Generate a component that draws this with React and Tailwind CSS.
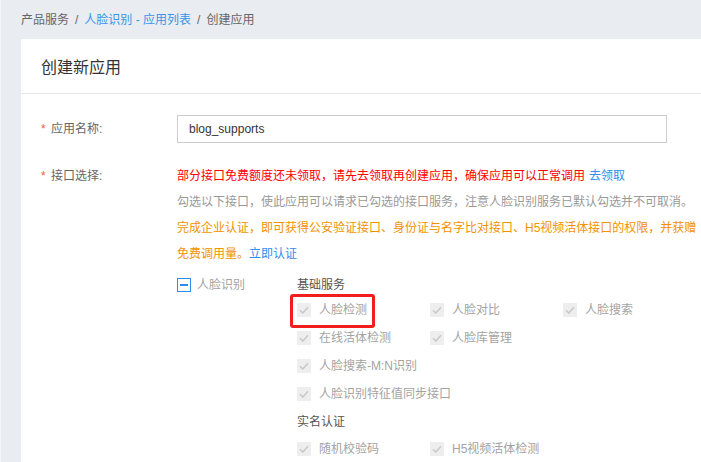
import React from 'react';

const font = { fontFamily: '"Liberation Sans", "Noto Sans CJK SC", sans-serif' };

const Check = () => (
  <span className="w-[14px] h-[14px] bg-[#eeeeee] flex items-center justify-center shrink-0">
    <svg width="10" height="8" viewBox="0 0 10 8">
      <path d="M1 4.2 L3.8 7 L9 1.3" fill="none" stroke="#c9c9c9" strokeWidth="1.6" />
    </svg>
  </span>
);

const Item = ({ label, marked }) => (
  <div className="relative h-[28px] flex items-center">
    <Check />
    <span className="ml-[8px] text-[#a3a3a3] whitespace-nowrap">{label}</span>
    {marked && (
      <div className="absolute left-[-7px] top-[-2px] w-[85px] h-[34px] border-[3px] border-[#f21d1d] rounded-[3px]" />
    )}
  </div>
);

const Section = ({ title, rows }) => (
  <div>
    <div className="h-[23px] flex items-center text-[#555]">{title}</div>
    {rows.map((row, i) => (
      <div key={i} className="grid grid-cols-[133px_133px_133px]">
        {row.map((it, j) =>
          it ? <Item key={j} label={it.label} marked={it.marked} /> : <div key={j} />
        )}
      </div>
    ))}
  </div>
);

export default function App() {
  return (
    <div className="w-[701px] h-[462px] overflow-hidden bg-[#e9ecf0] border-l border-[#f4f5f7] text-[12px]" style={font}>
      {/* Breadcrumb */}
      <div className="h-[39px] pl-[20px] flex items-center text-[#666]">
        <span>产品服务</span>
        <span className="mx-[6px]">/</span>
        <span className="text-[#3a94ea]">人脸识别 - 应用列表</span>
        <span className="mx-[6px]">/</span>
        <span>创建应用</span>
      </div>

      <div className="ml-[20px] bg-white h-[423px]">
        <div className="h-[55px] px-[20px] pt-[3px] flex items-center text-[16px] text-[#333] border-b border-[#e6e6e6]">
          创建新应用
        </div>

        <div className="pl-[20px] pt-[21px]">
          {/* App name */}
          <div className="flex items-center">
            <div className="w-[136px] flex items-center text-[#666]">
              <span className="text-[#f05a4a] w-[10px]">*</span>
              <span>应用名称:</span>
            </div>
            <div className="w-[490px] h-[28px] border border-[#cccccc] flex items-center px-[11px] text-[#333]">
              blog_supports
            </div>
          </div>

          {/* Interface selection */}
          <div className="flex mt-[20px]">
            <div className="w-[136px] h-[26px] flex items-center text-[#666]">
              <span className="text-[#f05a4a] w-[10px]">*</span>
              <span>接口选择:</span>
            </div>
            <div className="flex-1">
              <div className="leading-[26px] whitespace-nowrap text-[#ff0000]">
                部分接口免费额度还未领取，请先去领取再创建应用，确保应用可以正常调用
                <span className="text-[#2f8ef0] ml-[4px]">去领取</span>
              </div>
              <div className="leading-[26px] whitespace-nowrap text-[#999]">
                勾选以下接口，使此应用可以请求已勾选的接口服务，注意人脸识别服务已默认勾选并不可取消。
              </div>
              <div className="leading-[26px] whitespace-nowrap text-[#f39200]">
                完成企业认证，即可获得公安验证接口、身份证与名字比对接口、H5视频活体接口的权限，并获赠
              </div>
              <div className="leading-[26px] whitespace-nowrap text-[#f39200]">
                免费调用量。<span className="text-[#2f8ef0]">立即认证</span>
              </div>

              <div className="flex mt-[6px]">
                <div className="w-[120px] h-[23px] flex items-center">
                  <span className="w-[14px] h-[14px] border-[1.5px] border-[#2d8cf0] flex items-center justify-center">
                    <span className="w-[8px] h-[2px] bg-[#2d8cf0]" />
                  </span>
                  <span className="ml-[6px] text-[#a3a3a3]">人脸识别</span>
                </div>
                <div>
                  <Section
                    title="基础服务"
                    rows={[
                      [{ label: '人脸检测', marked: true }, { label: '人脸对比' }, { label: '人脸搜索' }],
                      [{ label: '在线活体检测' }, { label: '人脸库管理' }, null],
                      [{ label: '人脸搜索-M:N识别' }, null, null],
                      [{ label: '人脸识别特征值同步接口' }, null, null],
                    ]}
                  />
                  <div className="h-[27px] flex items-center text-[#555]">实名认证</div>
                  <div className="grid grid-cols-[133px_133px_133px]">
                    <Item label="随机校验码" />
                    <Item label="H5视频活体检测" />
                  </div>
                </div>
              </div>
            </div>
          </div>
        </div>
      </div>
    </div>
  );
}
